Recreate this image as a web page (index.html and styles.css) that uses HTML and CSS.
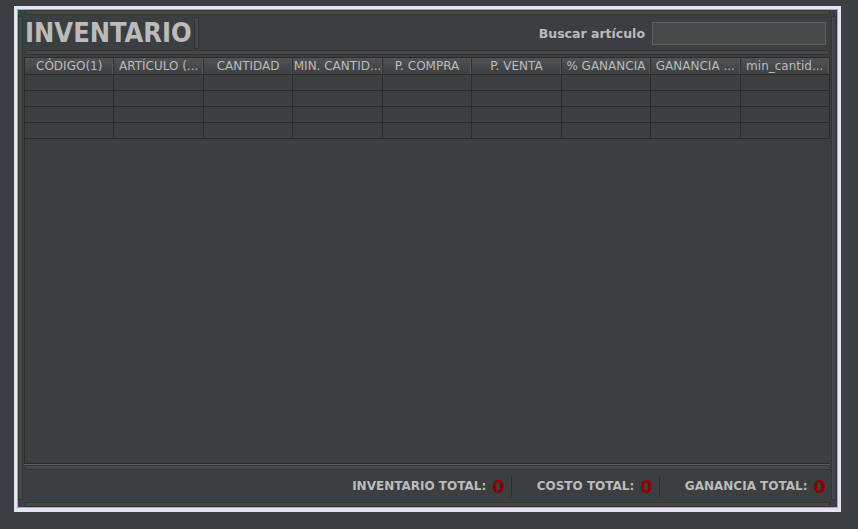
FILE: index.html
```html
<!DOCTYPE html>
<html lang="es">
<head>
<meta charset="utf-8">
<title>Inventario</title>
<link rel="stylesheet" href="styles.css">
</head>
<body>
<div class="frame">
  <div class="win">
    <div class="strip vstrip left"></div>
    <div class="content">
      <div class="strip hstrip"></div>
      <div class="titlebar">
        <div class="title">INVENTARIO</div>
        <div class="strip tstrip"></div>
        <div class="search">
          <span class="search-label">Buscar artículo</span>
          <div class="search-input"></div>
        </div>
      </div>
      <div class="strip hstrip mid"></div>
      <div class="table">
        <div class="thead">
          <div class="th">CÓDIGO(1)</div>
          <div class="th">ARTÍCULO (...</div>
          <div class="th">CANTIDAD</div>
          <div class="th">MIN. CANTID...</div>
          <div class="th">P. COMPRA</div>
          <div class="th">P. VENTA</div>
          <div class="th">% GANANCIA</div>
          <div class="th">GANANCIA ...</div>
          <div class="th last">min_cantid...</div>
        </div>
        <div class="row"><div class="td"></div><div class="td"></div><div class="td"></div><div class="td"></div><div class="td"></div><div class="td"></div><div class="td"></div><div class="td"></div><div class="td last"></div></div>
        <div class="row"><div class="td"></div><div class="td"></div><div class="td"></div><div class="td"></div><div class="td"></div><div class="td"></div><div class="td"></div><div class="td"></div><div class="td last"></div></div>
        <div class="row"><div class="td"></div><div class="td"></div><div class="td"></div><div class="td"></div><div class="td"></div><div class="td"></div><div class="td"></div><div class="td"></div><div class="td last"></div></div>
        <div class="row"><div class="td"></div><div class="td"></div><div class="td"></div><div class="td"></div><div class="td"></div><div class="td"></div><div class="td"></div><div class="td"></div><div class="td last"></div></div>
      </div>
      <div class="strip hstrip under"></div>
      <div class="footer">
        <div class="total"><span class="tlabel">INVENTARIO TOTAL:</span><span class="tval">0</span></div>
        <div class="sep"></div>
        <div class="total"><span class="tlabel">COSTO TOTAL:</span><span class="tval">0</span></div>
        <div class="sep"></div>
        <div class="total"><span class="tlabel">GANANCIA TOTAL:</span><span class="tval">0</span></div>
      </div>
      <div class="strip hstrip bottom"></div>
    </div>
    <div class="strip vstrip right"></div>
  </div>
</div>
</body>
</html>
```

FILE: styles.css
```css
html, body {
  margin: 0;
  padding: 0;
  background: #3c3f41;
  font-family: "DejaVu Sans", sans-serif;
  color: #bbbbbb;
}

.frame {
  margin: 6px 0 0 14px;
  width: 821px;
  height: 499px;
  border: 3px solid #e4e4fa;
  border-bottom-width: 4px;
}

.win {
  box-sizing: border-box;
  height: 499px;
  border: 1px solid #f5a300;
  background: #3c3f41;
  display: grid;
  grid-template-columns: 5px 806px 5px;
  column-gap: 1px;
}

.strip {
  box-sizing: border-box;
  background: #45484b;
  border: 1px solid #323436;
}

.vstrip {
  margin-top: 6px;
  height: 484px;
}

.content {
  display: flex;
  flex-direction: column;
}

.hstrip {
  height: 5px;
  margin-left: 1px;
}

.titlebar {
  height: 32px;
  margin-top: 2px;
  display: flex;
  align-items: stretch;
  padding-left: 1px;
}

.title {
  font-family: "DejaVu Sans Condensed", "DejaVu Sans", sans-serif;
  font-stretch: condensed;
  font-weight: bold;
  font-size: 27px;
  line-height: 32px;
  color: #bbbbbb;
}

.tstrip {
  width: 5px;
  margin-left: 2px;
}

.search {
  margin-left: auto;
  display: flex;
  align-items: center;
  padding-right: 4px;
}

.search-label {
  font-weight: bold;
  font-size: 12.5px;
  color: #bbbbbb;
  margin-right: 7px;
}

.search-input {
  box-sizing: border-box;
  width: 174px;
  height: 23px;
  background: #45494a;
  border: 1px solid #5e6163;
}

.mid {
  margin-top: 1px;
}

.table {
  margin-top: 2px;
  box-sizing: border-box;
  height: 407px;
  border: 1px solid #2b2b2b;
  border-right: none;
  box-shadow: 0 1px 0 #5b5e60;
}

.thead {
  display: grid;
  grid-template-columns: repeat(9, 1fr);
  height: 16px;
  background: linear-gradient(#505356, #3d4042);
  border-bottom: 1px solid #2b2b2b;
}

.th {
  font-size: 12px;
  line-height: 16px;
  text-align: center;
  white-space: nowrap;
  overflow: hidden;
  border-right: 1px solid #2e3032;
  box-shadow: inset -2px 0 0 -1px #56595b;
  color: #bbbbbb;
}

.th.last {
  border-right: 1px solid #2b2b2b;
}

.row {
  display: grid;
  grid-template-columns: repeat(9, 1fr);
  height: 16px;
  box-sizing: border-box;
  border-bottom: 1px solid #2b2b2b;
}

.td {
  border-right: 1px solid #2b2b2b;
}

.under {
  margin-top: 1px;
}

.footer {
  height: 32px;
  display: flex;
  align-items: center;
  justify-content: flex-end;
  padding-right: 4px;
}

.total {
  display: flex;
  align-items: center;
}

.tlabel {
  font-weight: bold;
  font-size: 12px;
  color: #bbbbbb;
  margin-right: 6px;
}

.tval {
  font-weight: bold;
  font-size: 18px;
  color: #8c0000;
}

.sep {
  width: 1px;
  height: 21px;
  background: #2b2d2f;
  margin: 0 25px 0 6px;
}

.bottom {
  margin-top: 0;
}
```
